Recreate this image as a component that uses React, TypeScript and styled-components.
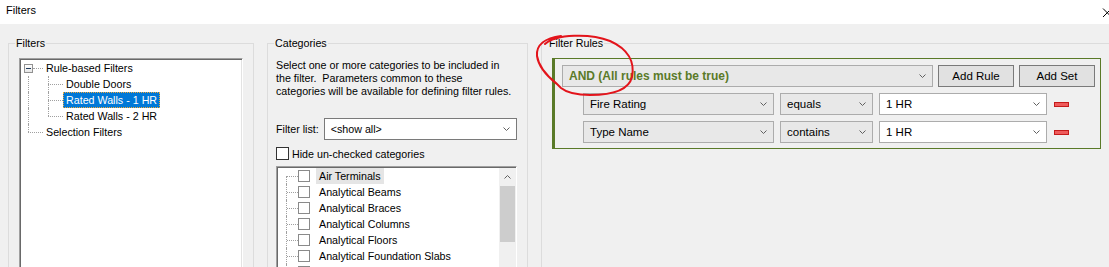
import styled, { createGlobalStyle } from "styled-components";

const GlobalStyle = createGlobalStyle`
  html, body {
    margin: 0;
    padding: 0;
    background: #f0f0f0;
  }
  body {
    font-family: "Liberation Sans", Arial, sans-serif;
    color: #000;
  }
  * {
    box-sizing: border-box;
  }
`;

type Line = "none" | "full" | "top" | "bottom";

const Window = styled.div`
  position: relative;
  width: 1109px;
  height: 267px;
  overflow: hidden;
  background: #f0f0f0;
`;

const TitleBar = styled.div`
  display: flex;
  justify-content: space-between;
  align-items: flex-start;
  height: 24px;
  padding: 4px 0 0 6px;
  background: #fff;
  font-size: 11px;
  line-height: 12px;
`;

const CloseIcon = styled.svg`
  margin-right: -3px;
`;

const Body = styled.div`
  display: flex;
  gap: 13px;
  padding: 19px 0 0 8px;
  font-size: 10.7px;
`;

const GroupBox = styled.div<{ $w: number }>`
  flex: none;
  width: ${(p) => p.$w}px;
  height: 300px;
  border: 1px solid #dcdcdc;
`;

const Legend = styled.div`
  width: fit-content;
  margin: -8px 0 0 6px;
  padding: 0 1px;
  line-height: 14px;
  background: #f0f0f0;
`;

const GroupBody = styled.div<{ $pad: string }>`
  padding: ${(p) => p.$pad};
`;

/* ---------- sunken list boxes ---------- */

const Sunken = styled.div`
  height: 260px;
  background: #fff;
  border: 1px solid;
  border-color: #a0a0a0 #fff #fff #a0a0a0;
  box-shadow: inset 1px 1px 0 #696969, inset -1px -1px 0 #e3e3e3;
`;

const TreeBox = styled(Sunken)`
  padding: 1px 0 0 1px;
`;

const Row = styled.div`
  display: flex;
  align-items: center;
  height: 16px;
`;

const Guide = styled.span<{ $w: number; $x: number; $v: Line; $h?: boolean; $from?: number }>`
  position: relative;
  flex: none;
  width: ${(p) => p.$w}px;
  height: 16px;

  &::before {
    content: "";
    display: ${(p) => (p.$v === "none" ? "none" : "block")};
    position: absolute;
    left: ${(p) => p.$x}px;
    top: ${(p) => (p.$v === "bottom" ? 8 : 0)}px;
    height: ${(p) => (p.$v === "full" ? 16 : 8)}px;
    border-left: 1px dotted #a0a0a0;
  }

  &::after {
    content: "";
    display: ${(p) => (p.$h ? "block" : "none")};
    position: absolute;
    left: ${(p) => p.$from ?? p.$x}px;
    right: 0;
    top: 8px;
    border-top: 1px dotted #a0a0a0;
  }
`;

const Expander = styled.span`
  position: absolute;
  left: 3px;
  top: 4px;
  width: 9px;
  height: 9px;
  z-index: 1;
  border: 1px solid #919191;
  background: linear-gradient(#fff, #e6e6e6);

  &::after {
    content: "";
    position: absolute;
    left: 1px;
    right: 1px;
    top: 3px;
    border-top: 1px solid #1e395b;
  }
`;

const TreeLabel = styled.span<{ $selected?: boolean }>`
  padding: 0 2px;
  line-height: 14px;
  white-space: nowrap;
  border: 1px dotted ${(p) => (p.$selected ? "#f2a93b" : "transparent")};
  background: ${(p) => (p.$selected ? "#0078d7" : "transparent")};
  color: ${(p) => (p.$selected ? "#fff" : "#000")};
`;

/* ---------- categories ---------- */

const Desc = styled.p`
  margin: 0;
  line-height: 13px;
`;

const FieldRow = styled.div`
  display: flex;
  align-items: center;
  gap: 5px;
  margin-top: 20px;
`;

const Select = styled.div`
  display: flex;
  flex: 1;
  align-items: center;
  justify-content: space-between;
  height: 22px;
  padding: 0 6px 0 6px;
  background: #fff;
  border: 1px solid #7a7a7a;
`;

const CheckRow = styled.label`
  display: flex;
  align-items: center;
  gap: 3px;
  margin-top: 7px;
  height: 13px;
`;

const Check = styled.span<{ $dark?: boolean; $size: number }>`
  flex: none;
  width: ${(p) => p.$size}px;
  height: ${(p) => p.$size}px;
  background: #fff;
  border: 1px solid ${(p) => (p.$dark ? "#333" : "#8a8a8a")};
`;

const ListBox = styled(Sunken)`
  display: flex;
  margin-top: 6px;
`;

const ListItems = styled.div`
  flex: 1;
  padding: 1px 0 0 1px;
`;

const ItemLabel = styled.span<{ $hot?: boolean }>`
  margin-left: 6px;
  padding: 0 3px;
  line-height: 16px;
  white-space: nowrap;
  background: ${(p) => (p.$hot ? "#e5e5e5" : "transparent")};
`;

const ScrollBar = styled.div`
  flex: none;
  width: 17px;
  margin: 1px 0 0 0;
  background: #f0f0f0;
`;

const ScrollArrow = styled.div`
  display: flex;
  align-items: center;
  justify-content: center;
  height: 17px;
`;

const Thumb = styled.div`
  height: 56px;
  margin: 1px 1px 0 1px;
  background: #cdcdcd;
`;

/* ---------- filter rules ---------- */

const RuleSet = styled.div`
  width: 549px;
  padding: 6px 5px 5px 7px;
  border: 1px solid #5a7a28;
  border-left-width: 3px;
  font-size: 11.5px;
`;

const Toolbar = styled.div`
  display: flex;
  gap: 5px;
`;

const RuleRow = styled.div`
  display: flex;
  align-items: center;
  gap: 6px;
  margin-top: 6px;
  padding-left: 21px;
`;

const Combo = styled.div<{ $w: number; $white?: boolean; $strong?: boolean }>`
  display: flex;
  flex: none;
  align-items: center;
  justify-content: space-between;
  width: ${(p) => p.$w}px;
  height: 22px;
  padding: 0 6px 0 6px;
  background: ${(p) => (p.$white ? "#fff" : "#e8e8e8")};
  border: 1px solid #acacac;
  white-space: nowrap;
  font-size: ${(p) => (p.$strong ? "12px" : "inherit")};
  font-weight: ${(p) => (p.$strong ? "bold" : "normal")};
  color: ${(p) => (p.$strong ? "#5a7a28" : "#000")};
`;

const Button = styled.button`
  flex: none;
  width: 76px;
  height: 22px;
  padding: 0;
  font: inherit;
  color: #000;
  background: #e1e1e1;
  border: 1px solid #7a7a7a;
`;

const Remove = styled.span`
  flex: none;
  width: 15px;
  height: 5px;
  margin-left: 1px;
  background: #ef5b5b;
  border: 1px solid #c41b1b;
`;

const Annotation = styled.svg`
  position: absolute;
  left: 0;
  top: 0;
  pointer-events: none;
`;

const Chevron = ({ up = false }: { up?: boolean }) => (
  <svg width="7" height="4" viewBox="0 0 7 4">
    <path
      d={up ? "M0.5 3.5 L3.5 0.5 L6.5 3.5" : "M0.5 0.5 L3.5 3.5 L6.5 0.5"}
      stroke="#606060"
      fill="none"
    />
  </svg>
);

// the last entry only peeks in at the bottom edge, so it carries no label
const categories = [
  "Air Terminals",
  "Analytical Beams",
  "Analytical Braces",
  "Analytical Columns",
  "Analytical Floors",
  "Analytical Foundation Slabs",
  "",
];

const rules = [
  { field: "Fire Rating", op: "equals", value: "1 HR" },
  { field: "Type Name", op: "contains", value: "1 HR" },
];

export default function App() {
  return (
    <Window>
      <GlobalStyle />
      <TitleBar>
        <span>Filters</span>
        <CloseIcon width="10" height="14" viewBox="0 0 10 14">
          <path d="M1 4.5 L9.5 13 M9.5 4.5 L1 13" stroke="#000" strokeWidth="1" fill="none" />
        </CloseIcon>
      </TitleBar>

      <Body>
        <GroupBox $w={246}>
          <Legend>Filters</Legend>
          <GroupBody $pad="8px 10px 0 10px">
            <TreeBox>
              <Row>
                <Guide $w={22} $x={7} $v="none" $h $from={12}>
                  <Expander />
                </Guide>
                <TreeLabel>Rule-based Filters</TreeLabel>
              </Row>
              <Row>
                <Guide $w={22} $x={7} $v="full" />
                <Guide $w={20} $x={5} $v="full" $h />
                <TreeLabel>Double Doors</TreeLabel>
              </Row>
              <Row>
                <Guide $w={22} $x={7} $v="full" />
                <Guide $w={20} $x={5} $v="full" $h />
                <TreeLabel $selected>Rated Walls - 1 HR</TreeLabel>
              </Row>
              <Row>
                <Guide $w={22} $x={7} $v="full" />
                <Guide $w={20} $x={5} $v="top" $h />
                <TreeLabel>Rated Walls - 2 HR</TreeLabel>
              </Row>
              <Row>
                <Guide $w={22} $x={7} $v="top" $h />
                <TreeLabel>Selection Filters</TreeLabel>
              </Row>
            </TreeBox>
          </GroupBody>
        </GroupBox>

        <GroupBox $w={261}>
          <Legend>Categories</Legend>
          <GroupBody $pad="9px 10px 0 8px">
            <Desc>
              Select one or more categories to be included in
              <br />
              the filter.&nbsp; Parameters common to these
              <br />
              categories will be available for defining filter rules.
            </Desc>
            <FieldRow>
              <span>Filter list:</span>
              <Select>
                <span>&lt;show all&gt;</span>
                <Chevron />
              </Select>
            </FieldRow>
            <CheckRow>
              <Check $dark $size={13} />
              <span>Hide un-checked categories</span>
            </CheckRow>
            <ListBox>
              <ListItems>
                {categories.map((name, i) => (
                  <Row key={i}>
                    <Guide $w={20} $x={8} $v={i === 0 ? "bottom" : "full"} $h $from={9} />
                    <Check $size={12} />
                    {name && <ItemLabel $hot={i === 0}>{name}</ItemLabel>}
                  </Row>
                ))}
              </ListItems>
              <ScrollBar>
                <ScrollArrow>
                  <Chevron up />
                </ScrollArrow>
                <Thumb />
              </ScrollBar>
            </ListBox>
          </GroupBody>
        </GroupBox>

        <GroupBox $w={600}>
          <Legend>Filter Rules</Legend>
          <GroupBody $pad="8px 0 0 10px">
            <RuleSet>
              <Toolbar>
                <Combo $w={371} $strong>
                  <span>AND (All rules must be true)</span>
                  <Chevron />
                </Combo>
                <Button>Add Rule</Button>
                <Button>Add Set</Button>
              </Toolbar>
              {rules.map((r) => (
                <RuleRow key={r.field}>
                  <Combo $w={191}>
                    <span>{r.field}</span>
                    <Chevron />
                  </Combo>
                  <Combo $w={93}>
                    <span>{r.op}</span>
                    <Chevron />
                  </Combo>
                  <Combo $w={168} $white>
                    <span>{r.value}</span>
                    <Chevron />
                  </Combo>
                  <Remove />
                </RuleRow>
              ))}
            </RuleSet>
          </GroupBody>
        </GroupBox>
      </Body>

      <Annotation width="1109" height="267" viewBox="0 0 1109 267">
        <path
          d="M545 44 C556 34, 590 33, 610 41 C628 49, 635 62, 632 77 C629 89, 614 95, 590 95 C576 95, 566 92, 561 88 L557 84 C552 80, 539 70, 537 56 C536 45, 545 38, 561 36"
          stroke="#e3141b"
          strokeWidth="2"
          fill="none"
          strokeLinecap="round"
        />
      </Annotation>
    </Window>
  );
}
